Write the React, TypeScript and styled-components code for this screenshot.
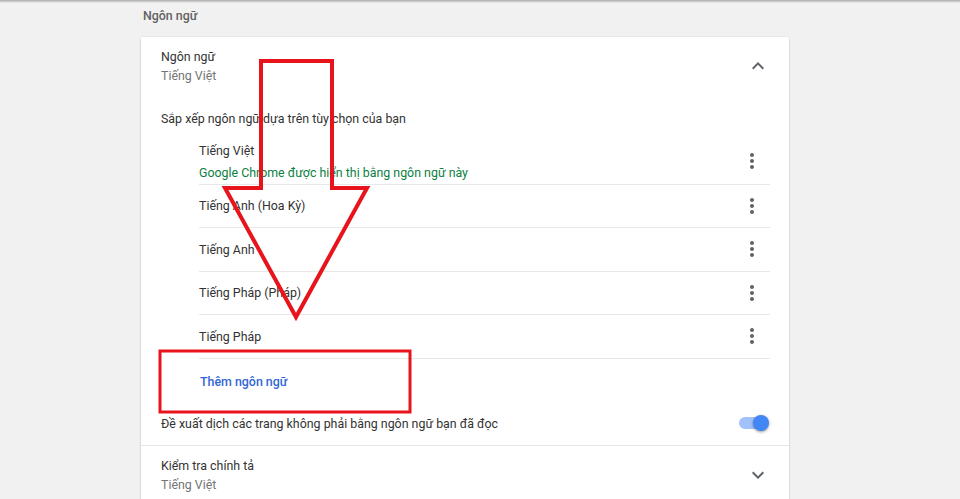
import React from "react";
import styled, {createGlobalStyle} from "styled-components";

const GlobalStyle = createGlobalStyle`
  html, body {
    margin: 0;
    padding: 0;
    background: #f1f1f1;
    font-family: Roboto, "Noto Sans", "Liberation Sans", sans-serif;
    font-size: 12.4px;
    color: #333333;
  }
  #root {
    position: relative;
    width: 960px;
    height: 499px;
    overflow: hidden;
  }
`;

const TopEdge = styled.div`
  height: 3px;
  background: linear-gradient(#a9a9a9, #f1f1f1);
`;

const Page = styled.div`
  margin-left: 141px;
  width: 648px;
`;

const PageTitle = styled.h2`
  margin: 0;
  height: 34px;
  line-height: 26px;
  padding-left: 2px;
  font-size: 12.4px;
  font-weight: 500;
  color: #616161;
`;

const Card = styled.div`
  background: #fff;
  border-radius: 2px;
  box-shadow: 0 0 2px rgba(0, 0, 0, 0.12), 0 2px 2px rgba(0, 0, 0, 0.2);
  min-height: 480px;
`;

const Section = styled.div<{divided?: boolean}>`
  padding: 0 19px 0 20px;
  border-top: ${p => (p.divided ? "1px solid #e5e5e5" : "none")};
`;

const ExpandRow = styled.div`
  display: flex;
  align-items: center;
  justify-content: space-between;
  padding: 10px 0 11px;
`;

const Label = styled.div`
  line-height: 19px;
`;

const SubLabel = styled.div`
  line-height: 19px;
  color: #757575;
`;

const IconBox = styled.span`
  display: flex;
  width: 24px;
  height: 24px;
  color: #5f6368;
`;

const Hint = styled.div`
  line-height: 19px;
  margin-top: 13px;
  margin-bottom: 12px;
`;

const List = styled.div`
  margin-left: 38px;
`;

const Item = styled.div<{tall?: boolean}>`
  display: flex;
  align-items: center;
  justify-content: space-between;
  min-height: 42.5px;
  padding: ${p => (p.tall ? "0 6px 1px 0" : "0 6px 0 0")};
  border-bottom: 1px solid #e8e8e8;
`;

const Note = styled.div`
  line-height: 19px;
  margin-top: 3px;
  color: #0b8043;
`;

const AddButton = styled.div`
  height: 46px;
  line-height: 46px;
  padding-left: 1px;
  color: #3367d6;
  font-weight: 500;
`;

const ToggleRow = styled.div`
  display: flex;
  align-items: center;
  justify-content: space-between;
  height: 37px;
  padding-bottom: 3px;
`;

const Toggle = styled.span`
  position: relative;
  width: 30px;
  height: 16px;
  margin-right: 1px;
`;

const Track = styled.span`
  position: absolute;
  left: 0;
  top: 2px;
  width: 27px;
  height: 12px;
  border-radius: 6px;
  background: #a1c2fa;
`;

const Knob = styled.span`
  position: absolute;
  right: 0;
  top: 0;
  width: 16px;
  height: 16px;
  border-radius: 50%;
  background: #4285f4;
  box-shadow: 0 1px 3px rgba(0, 0, 0, 0.4);
`;

const Overlay = styled.svg`
  position: absolute;
  left: 0;
  top: 0;
  pointer-events: none;
`;

const ChevronUp = () => (
    <IconBox>
        <svg viewBox="0 0 24 24" width="24" height="24" fill="currentColor">
            <path d="M12 8l-6 6 1.41 1.41L12 10.83l4.59 4.58L18 14z"/>
        </svg>
    </IconBox>
);

const ChevronDown = () => (
    <IconBox>
        <svg viewBox="0 0 24 24" width="24" height="24" fill="currentColor">
            <path d="M16.59 8.59L12 13.17 7.41 8.59 6 10l6 6 6-6z"/>
        </svg>
    </IconBox>
);

const MoreVert = () => (
    <IconBox>
        <svg viewBox="0 0 24 24" width="24" height="24" fill="currentColor">
            <path d="M12 8c1.1 0 2-.9 2-2s-.9-2-2-2-2 .9-2 2 .9 2 2 2zm0 2c-1.1 0-2 .9-2 2s.9 2 2 2 2-.9 2-2-.9-2-2-2zm0 6c-1.1 0-2 .9-2 2s.9 2 2 2 2-.9 2-2-.9-2-2-2z"/>
        </svg>
    </IconBox>
);

// các ngôn ngữ còn lại trong danh sách
const languages = ["Tiếng Anh (Hoa Kỳ)", "Tiếng Anh", "Tiếng Pháp (Pháp)", "Tiếng Pháp"];

const App = () => {
    return (
        <>
            <GlobalStyle/>
            <TopEdge/>
            <Page>
                <PageTitle>Ngôn ngữ</PageTitle>
                <Card>
                    <Section>
                        <ExpandRow>
                            <div>
                                <Label>Ngôn ngữ</Label>
                                <SubLabel>Tiếng Việt</SubLabel>
                            </div>
                            <ChevronUp/>
                        </ExpandRow>
                        <Hint>Sắp xếp ngôn ngữ dựa trên tùy chọn của bạn</Hint>
                        <List>
                            <Item tall>
                                <div>
                                    <Label>Tiếng Việt</Label>
                                    <Note>Google Chrome được hiển thị bằng ngôn ngữ này</Note>
                                </div>
                                <MoreVert/>
                            </Item>
                            {languages.map(lang => (
                                <Item key={lang}>
                                    <Label>{lang}</Label>
                                    <MoreVert/>
                                </Item>
                            ))}
                            <AddButton>Thêm ngôn ngữ</AddButton>
                        </List>
                        <ToggleRow>
                            <Label>Đề xuất dịch các trang không phải bằng ngôn ngữ bạn đã đọc</Label>
                            <Toggle>
                                <Track/>
                                <Knob/>
                            </Toggle>
                        </ToggleRow>
                    </Section>
                    <Section divided>
                        <ExpandRow>
                            <div>
                                <Label>Kiểm tra chính tả</Label>
                                <SubLabel>Tiếng Việt</SubLabel>
                            </div>
                            <ChevronDown/>
                        </ExpandRow>
                    </Section>
                </Card>
            </Page>
            <Overlay width="960" height="499" viewBox="0 0 960 499">
                <polygon
                    points="261,61 332,61 332,188 367,188 296,317 225,188 261,188"
                    fill="none" stroke="#e8141c" strokeWidth="4" strokeLinejoin="miter"/>
                <rect x="160" y="351" width="250" height="61" fill="none" stroke="#e8141c" strokeWidth="3"/>
            </Overlay>
        </>
    );
};

export default App;
